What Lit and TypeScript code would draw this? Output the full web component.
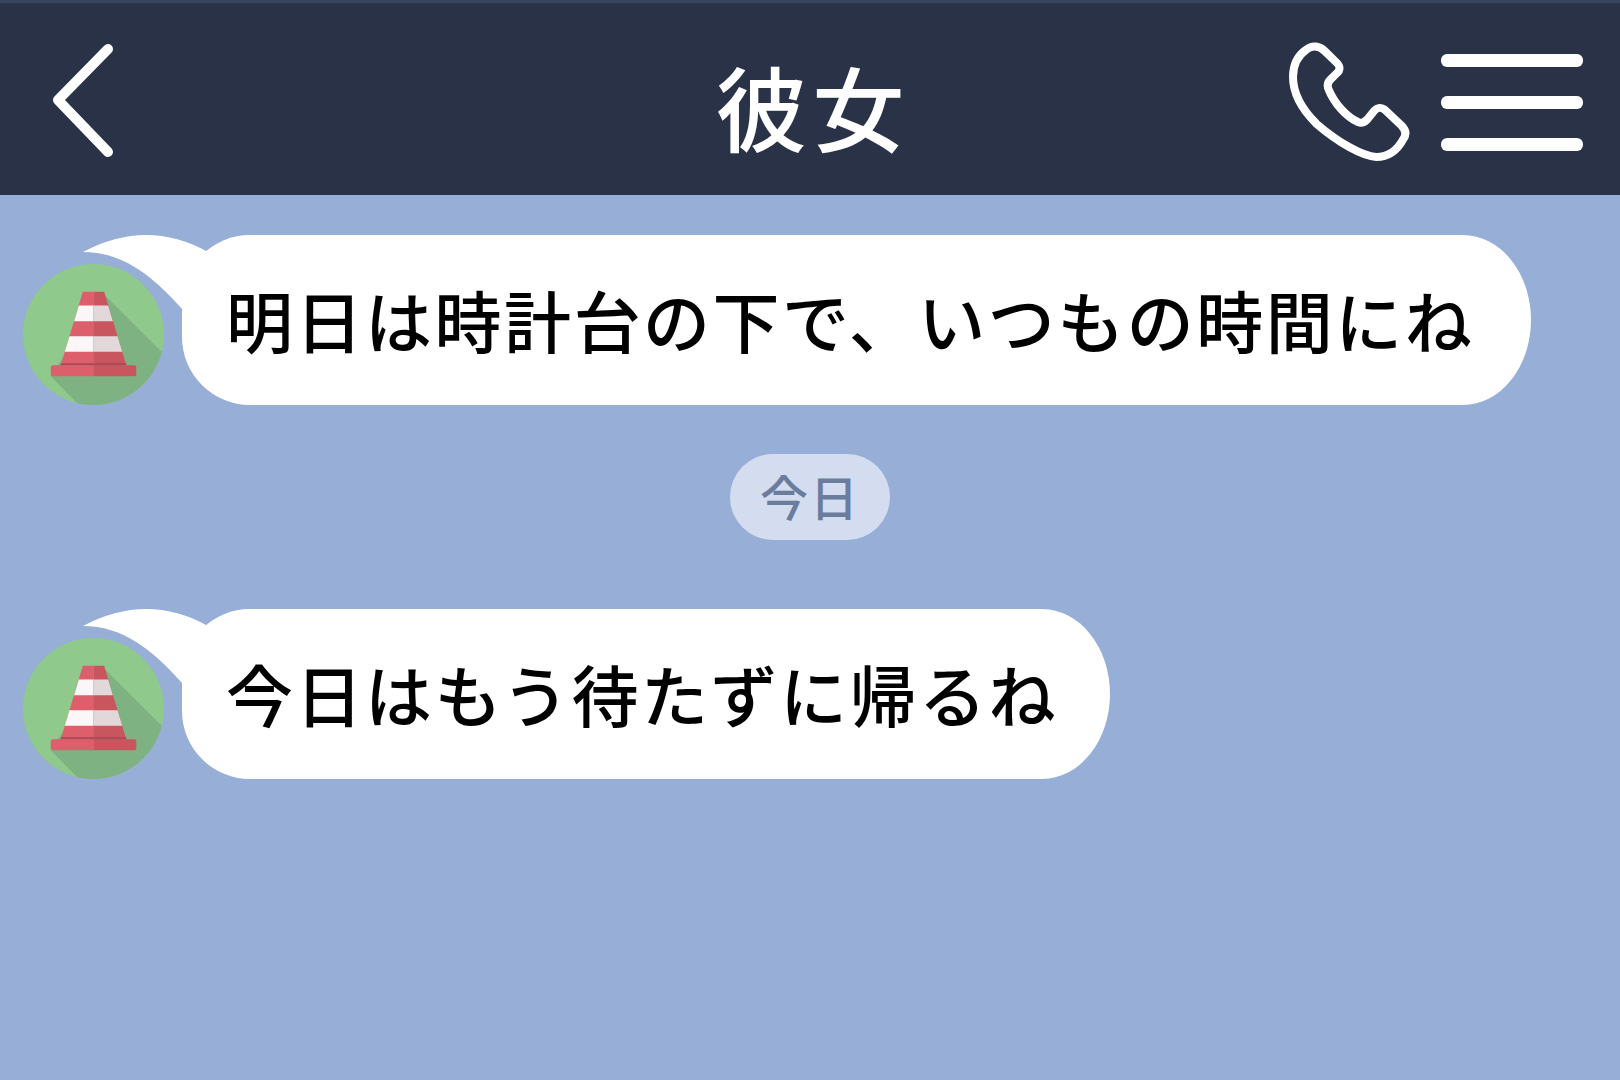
import { LitElement, html, css, svg } from 'lit'
import { customElement } from 'lit/decorators.js'

const messagesBefore = [{ text: '明日は時計台の下で、いつもの時間にね', width: 1349 }]
const messagesAfter = [{ text: '今日はもう待たずに帰るね', width: 928 }]

const cone = svg`
  <defs>
    <clipPath id="disc"><circle cx="280" cy="345" r="211" /></clipPath>
  </defs>
  <circle cx="280" cy="345" r="211" fill="#8fca8c" />
  <polygon clip-path="url(#disc)" points="312,225 500,412 500,570 250,570 152,470" fill="#7fb282" />
  <polygon points="248,217 280,217 280,437 182,437" fill="#dd5f6b" />
  <polygon points="280,217 312,217 378,437 280,437" fill="#c9555f" />
  <polygon points="236,258 280,258 280,305 222,305" fill="#fbf6f7" />
  <polygon points="280,258 324,258 338,305 280,305" fill="#e2d8da" />
  <polygon points="208,350 280,350 280,397 194,397" fill="#fbf6f7" />
  <polygon points="280,350 352,350 366,397 280,397" fill="#e2d8da" />
  <rect x="182" y="431" width="196" height="7" fill="#a94a55" />
  <path d="M158 437H280V470H158a6 6 0 0 1-6-6V443a6 6 0 0 1 6-6Z" fill="#dd5f6b" />
  <path d="M280 437H402a6 6 0 0 1 6 6V464a6 6 0 0 1-6 6H280Z" fill="#c9555f" />
`

@customElement('app-root')
export class AppRoot extends LitElement {
  static styles = css`
    :host {
      display: block;
      height: 100vh;
      background: #97aed7;
      font-family: 'Noto Sans CJK JP', 'Noto Sans', sans-serif;
      overflow: hidden;
    }

    .header {
      box-sizing: border-box;
      height: 195px;
      display: grid;
      grid-template-columns: 1fr auto 1fr;
      align-items: center;
      background: #2a3248;
      border-top: 3px solid #39445f;
      color: white;
    }

    .back {
      display: block;
      width: 70px;
      height: 120px;
      margin-left: 48px;
      margin-top: 2px;
    }

    .title {
      font-size: 92px;
      font-weight: 500;
      line-height: 1;
      letter-spacing: 5px;
      margin-right: -5px;
      margin-top: 12px;
    }

    .actions {
      display: flex;
      justify-content: flex-end;
      align-items: center;
      gap: 29px;
      padding-right: 37px;
      margin-top: 8px;
    }

    .phone {
      display: block;
      width: 124px;
      height: 124px;
    }

    .menu {
      display: flex;
      flex-direction: column;
      gap: 29px;
      width: 142px;
      margin-top: -2px;
    }

    .menu span {
      height: 13px;
      border-radius: 6px;
      background: white;
    }

    .chat {
      display: flex;
      flex-direction: column;
      padding: 40px 0 0 23px;
    }

    .row {
      display: flex;
      align-items: flex-end;
      gap: 18px;
    }

    .avatar {
      display: block;
      width: 141px;
      height: 141px;
      flex: none;
    }

    .bubble {
      position: relative;
      box-sizing: border-box;
      height: 170px;
      display: flex;
      align-items: center;
      padding: 0 0 4px 44px;
      border-radius: 68px / 68px 85px 85px 68px;
      background: white;
      color: #000;
      font-size: 67px;
      font-weight: 500;
      letter-spacing: 2.5px;
      white-space: nowrap;
    }

    .tail {
      position: absolute;
      left: -100px;
      top: 0;
      width: 140px;
      height: 80px;
    }

    .day {
      align-self: center;
      box-sizing: border-box;
      height: 86px;
      width: 160px;
      margin: 49px 0 69px -23px;
      padding-bottom: 4px;
      display: flex;
      align-items: center;
      justify-content: center;
      border-radius: 43px;
      background: #d3ddef;
      color: #6b7c9c;
      font-size: 48px;
      font-weight: 500;
      letter-spacing: 2px;
    }
  `

  private renderMessage(m: { text: string; width: number }) {
    return html`
      <div class="row">
        <svg class="avatar" viewBox="69 134 422 422">${cone}</svg>
        <div class="bubble" style="width: ${m.width}px">
          <svg class="tail" viewBox="0 0 140 80">
            <path d="M1 17Q65-17 126 17L140 80H100L100 74C70 40 40 17 1 17Z" fill="#fff" />
          </svg>
          ${m.text}
        </div>
      </div>
    `
  }

  render() {
    return html`
      <div class="header">
        <svg class="back" viewBox="0 0 70 120" fill="none" stroke="#fff" stroke-width="10" stroke-linecap="round" stroke-linejoin="round">
          <path d="M60 9L10 60L60 112" />
        </svg>
        <div class="title">彼女</div>
        <div class="actions">
          <svg class="phone" viewBox="85 62 372 372" fill="none" stroke="#fff" stroke-width="24" stroke-linejoin="round">
            <path d="M140 88C160 72 180 78 195 92L232 128C242 138 242 150 232 158L212 178C202 188 202 198 208 210C225 250 260 290 295 305C305 310 315 305 322 298L345 270C352 262 365 260 375 268L425 315C440 330 440 345 430 358C410 395 385 410 350 410C310 408 240 370 170 310C130 270 100 225 100 170C100 135 115 105 140 88Z" />
          </svg>
          <div class="menu"><span></span><span></span><span></span></div>
        </div>
      </div>
      <div class="chat">
        ${messagesBefore.map((m) => this.renderMessage(m))}
        <div class="day">今日</div>
        ${messagesAfter.map((m) => this.renderMessage(m))}
      </div>
    `
  }
}
